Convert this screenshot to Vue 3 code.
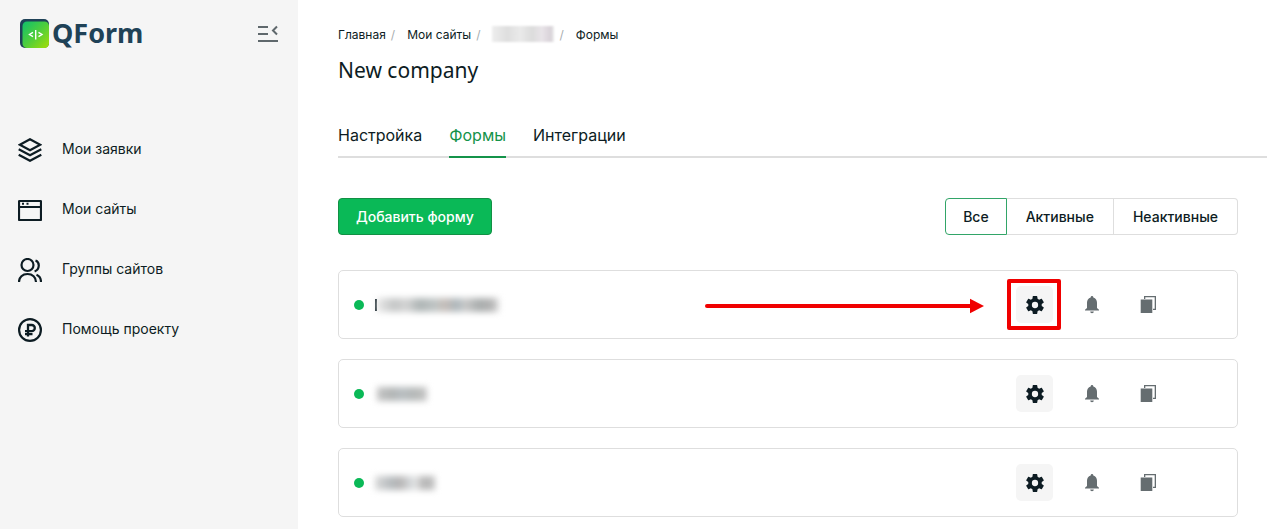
<script setup>
import { ref } from 'vue'

const menu = [
  { icon: 'layers', label: 'Мои заявки' },
  { icon: 'window', label: 'Мои сайты' },
  { icon: 'users', label: 'Группы сайтов' },
  { icon: 'ruble', label: 'Помощь проекту' },
]
const tabs = ['Настройка', 'Формы', 'Интеграции']
const activeTab = ref('Формы')
const filters = ['Все', 'Активные', 'Неактивные']
const activeFilter = ref('Все')
const forms = [
  { id: 1, kind: 'long', marked: true },
  { id: 2, kind: 'short', marked: false },
  { id: 3, kind: 'split', marked: false },
]
</script>

<template>
  <div class="page">
    <aside class="sidebar">
      <div class="brand">
        <a href="#" class="logo">
          <svg class="logo-mark" viewBox="0 0 30 30" aria-hidden="true">
            <defs>
              <linearGradient id="mark" x1="0" y1="0" x2="1" y2="1">
                <stop offset="0" stop-color="#0fc06c" />
                <stop offset="0.5" stop-color="#4fce3c" />
                <stop offset="1" stop-color="#a4de06" />
              </linearGradient>
            </defs>
            <rect x="0" y="0" width="29" height="29" rx="5" fill="#1f4257" />
            <rect x="2.500" y="2.500" width="26.500" height="26.500" rx="4.500" fill="url(#mark)" />
            <path d="M13 13.300 9.500 15.500l3.500 2.200M18.500 13.300l3.500 2.200-3.500 2.200M15.700 11v9.500" fill="none" stroke="#fff" stroke-width="1.400" />
          </svg>
          <span>QForm</span>
        </a>
        <button type="button" class="collapse" aria-label="Свернуть меню">
          <svg viewBox="0 0 20 18" fill="none" stroke="#5f686c" stroke-width="2">
            <path d="M0 2h10M0 9h10M0 16h20M19 1.500l-4 4 4 4" />
          </svg>
        </button>
      </div>
      <nav class="menu">
        <a v-for="item in menu" :key="item.icon" href="#" class="menu-item">
          <svg viewBox="0 0 24 24" fill="none" stroke="#0d1c23" stroke-width="2.200" aria-hidden="true">
            <path v-if="item.icon === 'layers'" d="M12 1.200 22.200 6.700 12 12.200 1.800 6.700zM.7 11.300 12 17.300l11.300-6M.7 16.800l11.300 6 11.300-6" />
            <g v-else-if="item.icon === 'window'">
              <rect x="1" y="3" width="22" height="19" rx="0.500" />
              <path d="M1 9h22M4 5.700h2M8.500 5.700h2" stroke-width="2" />
            </g>
            <g v-else-if="item.icon === 'users'">
              <circle cx="9.500" cy="7" r="6" />
              <path d="M1 24c0-4.800 3.500-8 8.500-8s8.500 3.200 8.500 8M17.500 2.500c4.500 1.500 4.500 9-.9 11M18.500 16.800c2.800 1.200 4.500 3.600 4.500 7.200" />
            </g>
            <g v-else>
              <circle cx="12" cy="12" r="10.900" />
              <path d="M10 18.500V7h3.700a2.900 2.900 0 0 1 0 6.200H7M7 16.200h7.500" stroke-width="2.300" />
            </g>
          </svg>
          <span>{{ item.label }}</span>
        </a>
      </nav>
    </aside>

    <main class="main">
      <nav class="crumbs" aria-label="Навигация">
        <a href="#">Главная</a><i>/</i>
        <a href="#">Мои сайты</a><i>/</i>
        <a href="#" class="crumb-hidden" aria-label="Сайт"></a><i>/</i>
        <a href="#">Формы</a>
      </nav>
      <h1>New company</h1>

      <div class="tabs" role="tablist">
        <button
          v-for="tab in tabs" :key="tab" type="button" role="tab"
          :aria-selected="activeTab === tab" :class="{ active: activeTab === tab }"
          @click="activeTab = tab"
        >{{ tab }}</button>
      </div>

      <div class="content">
        <div class="toolbar">
          <button type="button" class="add">Добавить форму</button>
          <div class="filters">
            <button
              v-for="f in filters" :key="f" type="button"
              :aria-pressed="activeFilter === f" :class="{ active: activeFilter === f }"
              @click="activeFilter = f"
            >{{ f }}</button>
          </div>
        </div>

        <div class="forms">
          <article v-for="form in forms" :key="form.id" class="card">
            <span class="dot"></span>
            <span class="name" :class="form.kind"><b></b></span>
            <div class="actions">
              <div class="settings">
                <button type="button" class="gear" aria-label="Настройки">
                  <svg viewBox="2 2 20 20" fill="#0d1c23">
                    <path d="M19.430 12.980c.04-.32.07-.64.07-.98s-.03-.66-.07-.98l2.110-1.650c.19-.15.24-.42.12-.64l-2-3.460c-.12-.22-.39-.3-.61-.22l-2.490 1c-.52-.4-1.080-.73-1.690-.98l-.38-2.650A.49.49 0 0 0 14 2h-4c-.25 0-.46.18-.49.42l-.38 2.650c-.61.25-1.170.59-1.690.98l-2.490-1c-.23-.09-.49 0-.61.22l-2 3.460c-.13.22-.07.49.12.64l2.110 1.650c-.04.32-.07.65-.07.98s.03.66.07.98l-2.110 1.650c-.19.15-.24.42-.12.64l2 3.460c.12.22.39.3.61.22l2.490-1c.52.4 1.080.73 1.690.98l.38 2.650c.03.24.24.42.49.42h4c.25 0 .46-.18.49-.42l.38-2.650c.61-.25 1.170-.59 1.690-.98l2.490 1c.23.09.49 0 .61-.22l2-3.460c.12-.22.07-.49-.12-.64l-2.110-1.650zM12 15.500a3.500 3.500 0 1 1 0-7 3.500 3.500 0 0 1 0 7z" />
                  </svg>
                </button>
                <template v-if="form.marked">
                  <svg class="arrow" viewBox="0 0 280 16" aria-hidden="true">
                    <path d="M2 8h264" stroke="#f00000" stroke-width="4" stroke-linecap="round" />
                    <path d="M265 .8 279 8l-14 7.200z" fill="#f00000" />
                  </svg>
                  <span class="frame"></span>
                </template>
              </div>
              <button type="button" aria-label="Уведомления">
                <svg viewBox="0 0 18 18" fill="#656d70">
                  <path d="M9 0c.8 0 1.300.6 1.300 1.300v.3c2.500.7 3.700 2.700 3.700 5.200V12l2 1.700v.8H2v-.8L4 12V6.800c0-2.500 1.200-4.500 3.700-5.200v-.3C7.700.6 8.200 0 9 0zM7.200 15.500h3.600c0 1-.8 1.700-1.800 1.700s-1.800-.7-1.800-1.700z" />
                </svg>
              </button>
              <button type="button" aria-label="Копировать">
                <svg viewBox="0 0 18 18" fill="#656d70">
                  <path d="M4 0h12v14h-3v-1.300h1.700V1.300H5.300V3H4zM.7 3.500H12.300V17H.7z" />
                </svg>
              </button>
            </div>
          </article>
        </div>
      </div>
    </main>
  </div>
</template>

<style>
body {
  margin: 0;
  background: #fff;
}
</style>

<style scoped>
.page {
  display: flex;
  min-height: 100vh;
  color: #0d1c23;
  font-family: Inter, "Liberation Sans", sans-serif;
  font-size: 14px;
}
a {
  color: inherit;
  text-decoration: none;
}
button {
  box-sizing: border-box;
  margin: 0;
  padding: 0;
  border: 0;
  background: none;
  color: inherit;
  font: inherit;
  cursor: pointer;
}
svg {
  display: block;
}
.sidebar {
  flex: 0 0 298px;
  background: #f5f5f5;
}
.brand {
  display: flex;
  align-items: center;
  justify-content: space-between;
  height: 68px;
  padding: 0 20px;
}
.logo {
  display: flex;
  align-items: center;
  gap: 2px;
  color: #1f4257;
  font: 700 27px/30px "Noto Sans", sans-serif;
}
.logo span {
  padding-bottom: 2px;
}
.logo-mark {
  width: 30px;
  height: 30px;
}
.collapse svg {
  width: 20px;
  height: 18px;
}
.menu {
  padding: 52px 18px 0;
}
.menu-item {
  display: flex;
  align-items: center;
  gap: 20px;
  height: 60px;
}
.menu-item span {
  padding-bottom: 3px;
}
.menu-item svg {
  width: 24px;
  height: 24px;
}
.main {
  flex: 1;
  min-width: 0;
  padding: 25px 0 12px 40px;
}
.crumbs {
  display: flex;
  align-items: center;
  height: 18px;
  font-size: 12px;
}
.crumbs i {
  margin: 0 12px 0 5px;
  color: #a8adaf;
  font-style: normal;
}
.crumb-hidden {
  width: 62px;
  height: 16px;
  background: linear-gradient(90deg, #eee, #dedede 25%, #eaeaea 45%, #dcdcdc 65%, #e8e4e8 80%, #d8d2d8 95%, #eee);
  filter: blur(1px);
}
h1 {
  margin: 12px 0 0;
  font: 400 21px/30px "Noto Sans", sans-serif;
}
.tabs {
  display: flex;
  gap: 27px;
  height: 43px;
  margin-top: 28px;
  border-bottom: 2px solid #dedede;
  font-size: 16px;
}
.tabs button {
  height: 45px;
  border-bottom: 2px solid transparent;
}
.tabs .active {
  border-color: #14934a;
  color: #14934a;
}
.content {
  padding: 40px 29px 0 0;
}
.toolbar {
  display: flex;
  justify-content: space-between;
  height: 37px;
  font-weight: 500;
}
.add {
  padding: 0 17px;
  border: 1px solid #129044;
  border-radius: 4px;
  background: #0ab957;
  color: #fff;
}
.filters {
  display: flex;
}
.filters button {
  padding: 0 19px;
  border: 1px solid #dedede;
  border-left-width: 0;
}
.filters button:first-child {
  padding: 0 17px;
  border-left-width: 1px;
  border-radius: 4px 0 0 4px;
}
.filters button:last-child {
  border-radius: 0 4px 4px 0;
}
.filters .active {
  border-color: #32a568;
}
.forms {
  display: grid;
  gap: 20px;
  margin-top: 35px;
}
.card {
  box-sizing: border-box;
  display: flex;
  align-items: center;
  height: 69px;
  padding: 0 70px 0 15px;
  border: 1px solid #dedede;
  border-radius: 5px;
}
.dot {
  width: 10px;
  height: 10px;
  border-radius: 50%;
  background: #0ab957;
}
.name {
  display: flex;
  align-items: center;
  height: 22px;
  margin-left: 11px;
}
.name b {
  height: 14px;
  filter: blur(3px);
}
.long::before {
  content: "";
  width: 2px;
  height: 12px;
  background: #0d1c23;
}
.long b {
  width: 122px;
  background: linear-gradient(90deg, #e8e8e8, #c4c6c6 14%, #d4d4d4 24%, #aeb5b5 35%, #c0c5c5 48%, #c6bdb8 56%, #acb7bc 65%, #cacaca 72%, #a9adad 84%, #b4b4b4 94%, #e0e0e0);
}
.short b {
  width: 50px;
  margin-left: 2px;
  background: linear-gradient(90deg, #c4c4c4, #b2b5b5 30%, #b9bfc2 50%, #b5b8b7 75%, #c6c6c6);
}
.split b {
  width: 60px;
  background: linear-gradient(90deg, #dadada, #b5babd 28%, #b6b4b4 42%, #d6dadc 60%, #e4e4e4 68%, #b5b5b5 80%, #c2c2c2);
}
.actions {
  display: flex;
  gap: 20px;
  margin-left: auto;
}
.actions button {
  display: grid;
  place-items: center;
  width: 37px;
  height: 37px;
  border-radius: 5px;
}
.actions svg {
  width: 18px;
  height: 18px;
}
.settings {
  position: relative;
}
.actions .gear {
  background: #f5f5f5;
}
/* Hint drawn over the card: arrow and frame around the settings button */
.actions .arrow {
  position: absolute;
  top: 12px;
  right: 68px;
  width: 280px;
  height: 16px;
}
.frame {
  position: absolute;
  box-sizing: border-box;
  top: -7px;
  left: -9px;
  width: 54px;
  height: 51px;
  border: 4px solid #f00000;
  border-radius: 2px;
}
</style>
